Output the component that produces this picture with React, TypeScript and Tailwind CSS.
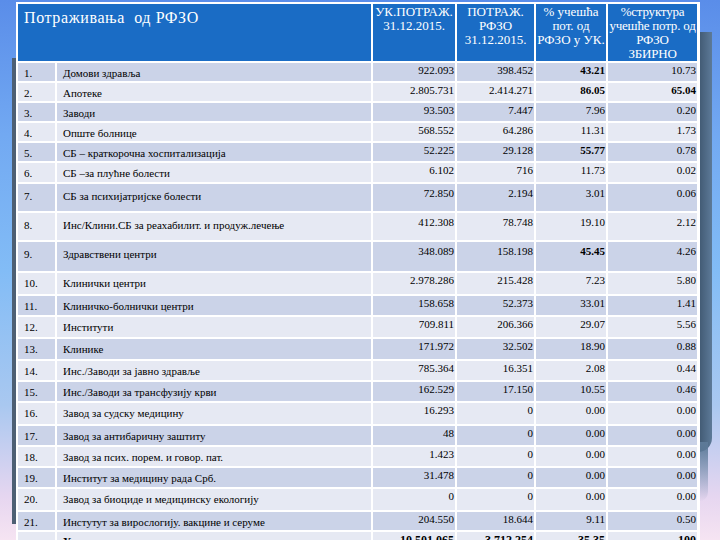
import React from "react";

type Row = [string, string, string, string, string, string, boolean, boolean];

const rows: Row[] = [
  ["1.", "Домови здравља", "922.093", "398.452", "43.21", "10.73", true, false],
  ["2.", "Апотеке", "2.805.731", "2.414.271", "86.05", "65.04", true, true],
  ["3.", "Заводи", "93.503", "7.447", "7.96", "0.20", false, false],
  ["4.", "Опште болнице", "568.552", "64.286", "11.31", "1.73", false, false],
  ["5.", "СБ – краткорочна хоспитализација", "52.225", "29.128", "55.77", "0.78", true, false],
  ["6.", "СБ –за плућне болести", "6.102", "716", "11.73", "0.02", false, false],
  ["7.", "СБ за психијатријске болести", "72.850", "2.194", "3.01", "0.06", false, false],
  ["8.", "Инс/Клини.СБ за реахабилит. и продуж.лечење", "412.308", "78.748", "19.10", "2.12", false, false],
  ["9.", "Здравствени центри", "348.089", "158.198", "45.45", "4.26", true, false],
  ["10.", "Клинички центри", "2.978.286", "215.428", "7.23", "5.80", false, false],
  ["11.", "Клиничко-болнички центри", "158.658", "52.373", "33.01", "1.41", false, false],
  ["12.", "Институти", "709.811", "206.366", "29.07", "5.56", false, false],
  ["13.", "Клинике", "171.972", "32.502", "18.90", "0.88", false, false],
  ["14.", "Инс./Заводи за јавно здравље", "785.364", "16.351", "2.08", "0.44", false, false],
  ["15.", "Инс./Заводи за трансфузију крви", "162.529", "17.150", "10.55", "0.46", false, false],
  ["16.", "Завод за судску медицину", "16.293", "0", "0.00", "0.00", false, false],
  ["17.", "Завод за антибаричну заштиту", "48", "0", "0.00", "0.00", false, false],
  ["18.", "Завод за псих. порем. и говор. пат.", "1.423", "0", "0.00", "0.00", false, false],
  ["19.", "Институт за медицину рада Срб.", "31.478", "0", "0.00", "0.00", false, false],
  ["20.", "Завод за биоциде и медицинску екологију", "0", "0", "0.00", "0.00", false, false],
  ["21.", "Инстутут за вирослогију. вакцине и серуме", "204.550", "18.644", "9.11", "0.50", false, false],
];

const tall = new Set([6, 7, 8]);

export default function App() {
  return (
    <div className="w-[720px] h-[540px] overflow-hidden bg-[linear-gradient(180deg,#5a8de9_0%,#72a9f2_25%,#82bcf6_50%,#a9c8f0_75%,#e6d6f0_92%,#f6e4f2_100%)] pl-[16px] pt-[2px] font-['Liberation_Serif','Times_New_Roman',serif]">
      <div className="relative w-[684px]">
        <div className="absolute left-[-4px] top-[56px] h-[466px] w-[6px] bg-[#4d5f74]" />
        <div className="absolute right-[-12px] top-[30px] h-[420px] w-[14px] rounded-br-[30px] bg-[linear-gradient(90deg,#3f5770,#5d7a98)]" />
        <div className="absolute right-[-8px] top-[440px] h-[60px] w-[10px] rounded-br-[40px] bg-[linear-gradient(180deg,#5d7a98,rgba(120,150,190,0))]" />
        <div className="relative grid grid-cols-[37px_314px_82px_77px_70px_89px] grid-rows-[57px_18px_18px_18px_18px_18px_19px_27px_27px_29px_21px_19px_20px_20px_19px_19px_21px_19px_19px_19px_21px_18px_24px] gap-[2px] bg-white p-[2px] text-[11px] leading-[13px] text-black">
          <div className="col-span-2 bg-[#1a6cc5] pl-[6px] pt-[5px] text-[16px] leading-[18px] text-white tracking-[0.6px]">
            Потраживања&nbsp; од РФЗО
          </div>
          <div className="bg-[#1a6cc5] pt-[1px] text-center text-[13px] leading-[14px] text-white whitespace-nowrap">
            УК.ПОТРАЖ.
            <br />
            31.12.2015.
          </div>
          <div className="bg-[#1a6cc5] pt-[1px] text-center text-[13px] leading-[14px] text-white whitespace-nowrap">
            ПОТРАЖ.
            <br />
            РФЗО
            <br />
            31.12.2015.
          </div>
          <div className="bg-[#1a6cc5] pt-[1px] text-center text-[13px] leading-[14px] text-white whitespace-nowrap">
            % учешћа
            <br />
            пот. од
            <br />
            РФЗО у УК.
          </div>
          <div className="bg-[#1a6cc5] pt-[1px] text-center text-[13px] leading-[14px] text-white whitespace-nowrap tracking-[-0.2px]">
            %структура
            <br />
            учешће потр. од
            <br />
            РФЗО
            <br />
            ЗБИРНО
          </div>
          {rows.map((r, i) => {
            const bg = i % 2 === 0 ? "bg-[#cbd3e8]" : "bg-[#e6e9f3]";
            const lp = tall.has(i) ? "pt-[6px]" : "pt-[4px]";
            const rp = tall.has(i) ? "pt-[3px]" : "pt-[1px]";
            return (
              <React.Fragment key={i}>
                <div className={`${bg} ${lp} pl-[6px]`}>{r[0]}</div>
                <div className={`${bg} ${lp} pl-[6px] whitespace-nowrap`}>{r[1]}</div>
                <div className={`${bg} ${rp} pr-[1px] text-right`}>{r[2]}</div>
                <div className={`${bg} ${rp} pr-[1px] text-right`}>{r[3]}</div>
                <div className={`${bg} ${rp} pr-[1px] text-right ${r[6] ? "font-bold" : ""}`}>{r[4]}</div>
                <div className={`${bg} ${rp} pr-[1px] text-right ${r[7] ? "font-bold" : ""}`}>{r[5]}</div>
              </React.Fragment>
            );
          })}
          <div className="bg-[#e6e9f3] pl-[6px] pt-[4px]"></div>
          <div className="bg-[#e6e9f3] pl-[6px] pt-[3px] font-bold">Укупно</div>
          <div className="bg-[#e6e9f3] pr-[1px] pt-[2px] text-right text-[12px] font-bold">10.501.065</div>
          <div className="bg-[#e6e9f3] pr-[1px] pt-[2px] text-right text-[12px] font-bold">3.712.254</div>
          <div className="bg-[#e6e9f3] pr-[1px] pt-[2px] text-right text-[12px] font-bold">35.35</div>
          <div className="bg-[#e6e9f3] pr-[1px] pt-[2px] text-right text-[12px] font-bold">100</div>
        </div>
      </div>
    </div>
  );
}
